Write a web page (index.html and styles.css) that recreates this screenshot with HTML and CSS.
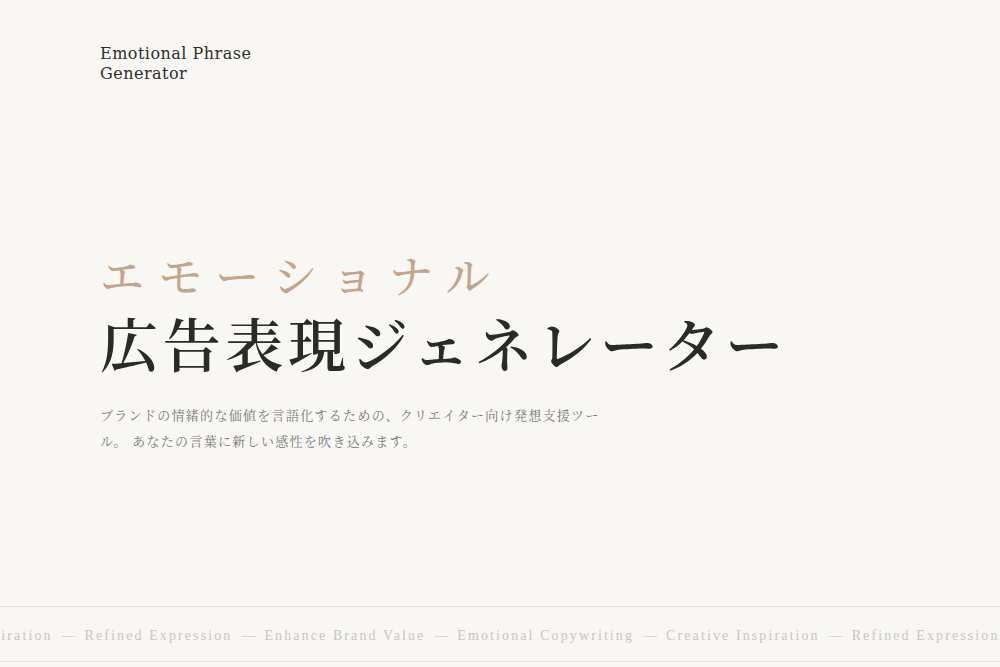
FILE: index.html
```html
<!DOCTYPE html>
<html lang="ja">
<head>
<meta charset="utf-8">
<title>Emotional Phrase Generator</title>
<link rel="stylesheet" href="styles.css">
</head>
<body>
<div class="page">
  <header class="brand">Emotional Phrase<br>Generator</header>
  <main class="hero">
    <h1 class="title">
      <span class="title-accent">エモーショナル</span>
      <span class="title-main">広告表現ジェネレーター</span>
    </h1>
    <p class="lead">ブランドの情緒的な価値を言語化するための、クリエイター向け発想支援ツール。 あなたの言葉に新しい感性を吹き込みます。</p>
  </main>
  <div class="ticker">
    <div class="ticker-track">
      <span>Creative Inspiration</span><span class="dash">—</span>
      <span>Refined Expression</span><span class="dash">—</span>
      <span>Enhance Brand Value</span><span class="dash">—</span>
      <span>Emotional Copywriting</span><span class="dash">—</span>
      <span>Creative Inspiration</span><span class="dash">—</span>
      <span>Refined Expression</span><span class="dash">—</span>
      <span>Enhance Brand Value</span>
    </div>
  </div>
</div>
</body>
</html>
```
FILE: styles.css
```css
html, body {
  margin: 0;
  padding: 0;
  background: #f8f7f4;
}
body {
  width: 1000px;
  height: 667px;
  overflow: hidden;
  font-family: "Noto Serif CJK JP", "Noto Sans CJK JP", serif;
}
.page {
  display: flex;
  flex-direction: column;
  height: 667px;
}
.brand {
  padding: 44px 0 0 100px;
  font-family: "DejaVu Serif", "Liberation Serif", serif;
  font-size: 16px;
  line-height: 20px;
  letter-spacing: 0.03em;
  color: #2e2e2e;
}
.hero {
  padding: 0 0 0 100px;
  margin-top: 162px;
  flex: 1;
}
.title {
  margin: 0;
  font-weight: 400;
  display: flex;
  flex-direction: column;
  gap: 4px;
}
.title-accent {
  font-size: 44px;
  line-height: 56px;
  letter-spacing: 0.33em;
  color: #c4a58b;
  font-weight: 500;
}
.title-main {
  font-size: 58px;
  line-height: 72px;
  letter-spacing: 0.08em;
  color: #2a2a2a;
  font-weight: 600;
}
.lead {
  margin: 24px 0 0;
  max-width: 512px;
  font-size: 13px;
  line-height: 26px;
  letter-spacing: 0.1em;
  color: #777777;
}
.ticker {
  margin-bottom: 5px;
  border-top: 1px solid #e6e3de;
  border-bottom: 1px solid #e6e3de;
  height: 54px;
  overflow: hidden;
  display: flex;
  align-items: center;
}
.ticker-track {
  display: flex;
  gap: 9px;
  white-space: nowrap;
  transform: translateX(-101px);
  padding-top: 3px;
  font-family: "Liberation Serif", serif;
  font-size: 14px;
  letter-spacing: 0.15em;
  color: #c9c6c1;
}
.dash {
  letter-spacing: 0;
}
```
